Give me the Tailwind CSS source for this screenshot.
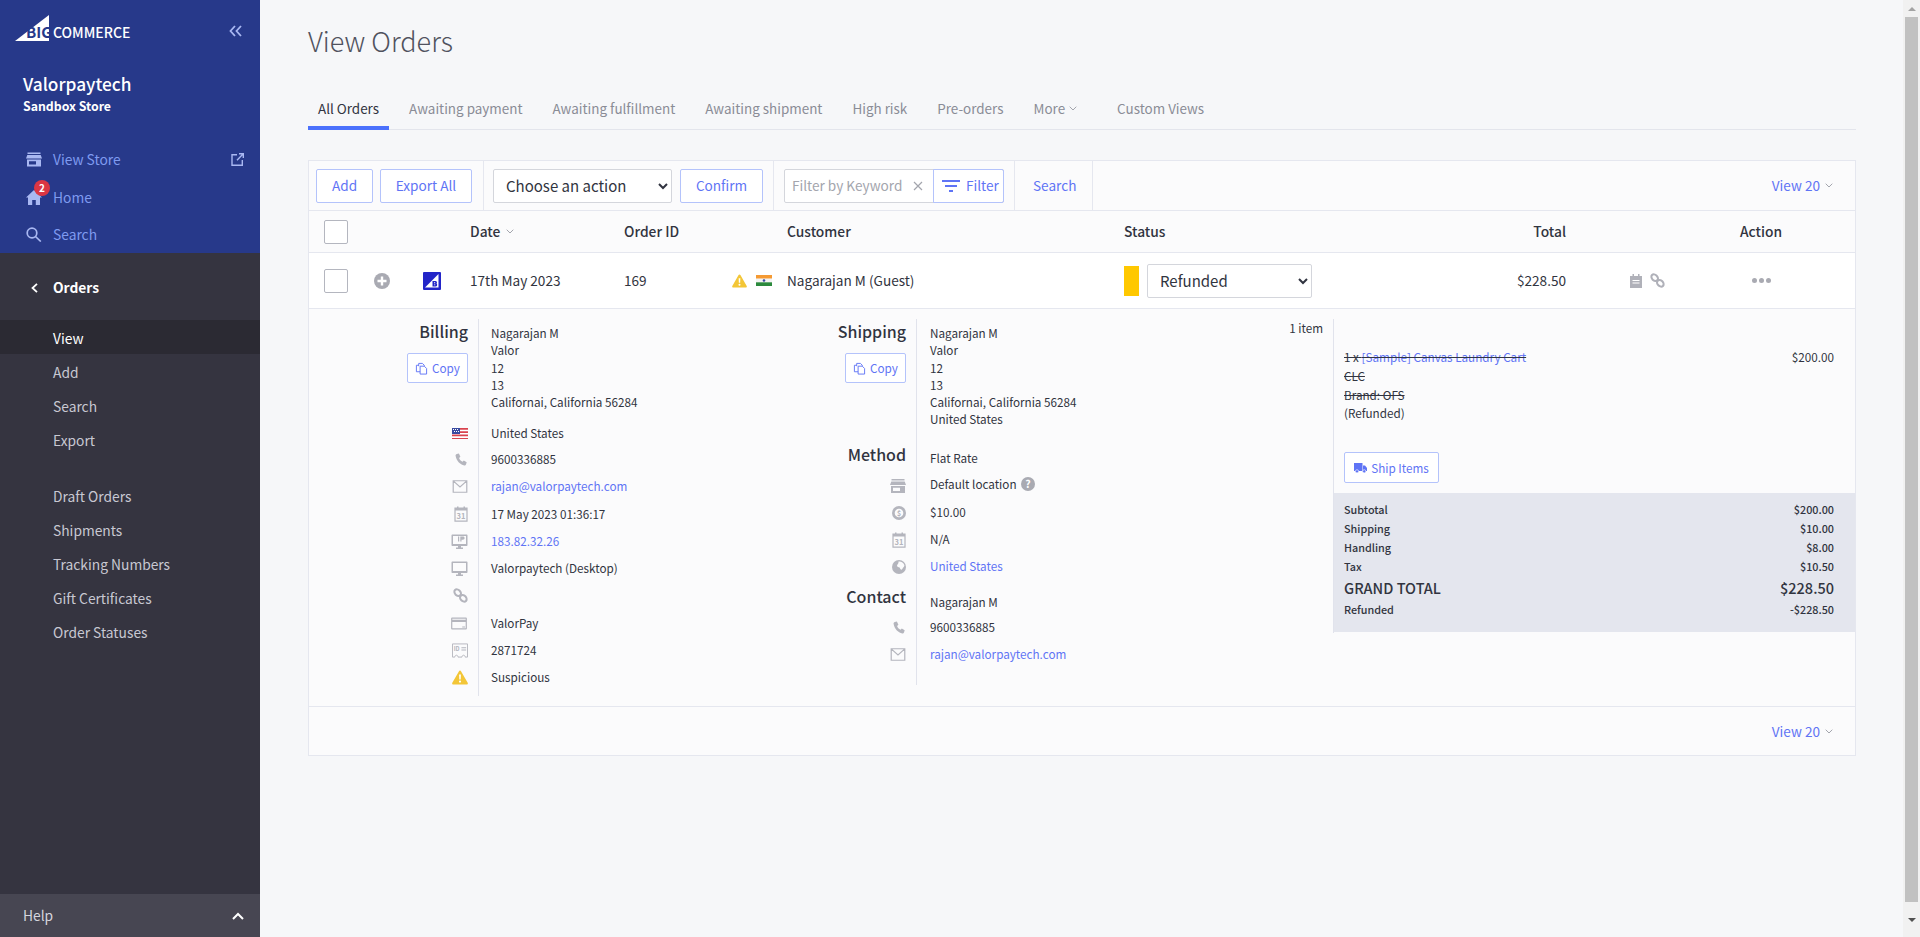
<!DOCTYPE html>
<html lang="en">
<head>
    <meta charset="UTF-8">
    <meta name="viewport" content="width=device-width, initial-scale=1.0">
    <title>View Orders</title>
    <script src="https://cdn.jsdelivr.net/npm/@tailwindcss/browser@4"></script>
</head>
<body class="bg-[#f6f7f9] text-[#313440] [font-family:'Noto_Sans_CJK_JP','Lato',sans-serif]">
    <!-- icon sprite -->
    <svg class="hidden" xmlns="http://www.w3.org/2000/svg">
        <symbol id="i-phone" viewBox="0 0 16 16"><path fill="currentColor" d="M3.2 1.2 5.6.6l1.7 3.6-1.5 1.4c.7 1.9 2 3.4 3.9 4.4l1.5-1.3 3.3 2-.8 2.5c-.3.8-1.1 1.2-1.9 1C6.900 13.100 2.700 8.600 1.800 3c-.1-.8.5-1.500 1.400-1.800z"/></symbol>
        <symbol id="i-mail" viewBox="0 0 16 14"><path fill="none" stroke="currentColor" stroke-width="1.300" d="M.7.8h14.600v12.400H.7zM1 1.200l7 6.300 7-6.300"/></symbol>
        <symbol id="i-cal" viewBox="0 0 14 16"><path fill="none" stroke="currentColor" stroke-width="1.200" d="M1 2.200h12v13H1z"/><path fill="currentColor" d="M1 2h12v2.500H1zM3 .5h1.500V3H3zM9.500.5H11V3H9.500z"/><text x="7" y="12.800" text-anchor="middle" font-size="7.500" font-weight="700" fill="currentColor">31</text></symbol>
        <symbol id="i-ip" viewBox="0 0 17 15"><path fill="currentColor" d="M1.500.5h14c.6 0 1 .4 1 1v9.500c0 .6-.4 1-1 1H10v1.500h2V15H5v-1.500h2V12H1.500c-.6 0-1-.4-1-1V1.500c0-.6.4-1 1-1z"/><path fill="#fbfbfc" d="M2 2h13v8H2z"/><path fill="currentColor" d="M7 2.500h1.200v5H7zM9.300 2.500h2.500c1.200 0 1.800.7 1.800 1.600s-.7 1.600-1.800 1.600h-1.300v1.800H9.300z"/></symbol>
        <symbol id="i-monitor" viewBox="0 0 17 15"><path fill="currentColor" d="M1.500.5h14c.6 0 1 .4 1 1v9.500c0 .6-.4 1-1 1H10v1.500h2V15H5v-1.500h2V12H1.500c-.6 0-1-.4-1-1V1.500c0-.6.4-1 1-1z"/><path fill="#fbfbfc" d="M2 2h13v8H2z"/></symbol>
        <symbol id="i-link" viewBox="0 0 16 16"><g fill="none" stroke="currentColor" stroke-width="2.200"><ellipse cx="5" cy="5" rx="4" ry="3" transform="rotate(45 5 5)"/><ellipse cx="11" cy="11" rx="4" ry="3" transform="rotate(45 11 11)"/></g></symbol>
        <symbol id="i-card" viewBox="0 0 18 14"><path fill="currentColor" d="M1.500.5h15c.6 0 1 .4 1 1v11c0 .6-.4 1-1 1h-15c-.6 0-1-.4-1-1v-11c0-.6.4-1 1-1zM1.800 1.800V3h14.400V1.800zm0 3.700v6.700h14.400V5.500zm10.700 4.700h3v1h-3z"/></symbol>
        <symbol id="i-id" viewBox="0 0 17 15"><path fill="none" stroke="currentColor" d="M.5.500h16v14H14c0-1-.6-2-1.700-2s-1.700 1-1.700 2H6.400c0-1-.6-2-1.700-2S3 13.500 3 14.500H.5z"/><text x="1.800" y="8.500" font-size="6" font-weight="700" fill="currentColor">ID</text><path fill="currentColor" d="M10 4h5v1h-5zM10 6.500h5v1h-5z"/></symbol>
        <symbol id="i-warn" viewBox="0 0 16 15"><path fill="#f3c637" d="M8 .5c.5 0 .8.3 1 .7l6.700 11.600c.4.8 0 1.700-1 1.700H1.300c-1 0-1.400-.9-1-1.700L7 1.200c.2-.4.500-.7 1-.7z"/><path fill="#fff" d="M7.100 4.500h1.800l-.2 5H7.300zM8 10.500a1.100 1.100 0 1 1 0 2.200 1.100 1.100 0 0 1 0-2.200z"/></symbol>
        <symbol id="i-store" viewBox="0 0 16 14"><path fill="currentColor" d="M1.500 0h13v1.500h-13zM1.300 2.500h13.400L16 6H0zM1 7h14v7H1zm2 1.800V12h7V8.800z"/></symbol>
        <symbol id="i-coin" viewBox="0 0 14 14"><circle cx="7" cy="7" r="7" fill="currentColor"/><circle cx="7" cy="7" r="4.300" fill="#fbfbfc"/><text x="7" y="9.500" text-anchor="middle" font-size="7" font-weight="700" fill="currentColor">$</text></symbol>
        <symbol id="i-globe" viewBox="0 0 14 14"><circle cx="7" cy="7" r="7" fill="currentColor"/><path fill="#fbfbfc" d="M6.500 1.500c2.500-.4 5 1 5.800 3.400.4 1.300-.6 2-1.300 2.800-.6.800-.7 2-1.800 2-1 0-1-1.400-1.700-2.100-.8-.7-2.300-.5-2.500-1.600C4.800 4.700 7 3.800 6.500 1.500z"/></symbol>
        <symbol id="i-copy" viewBox="0 0 14 14"><g fill="none" stroke="currentColor"><path d="M5.500 4.500h4.500l2.500 2.500v6h-7z"/><path d="M5.500 10.500h-4v-7H4"/><path d="M4 4.500v-3h4l2 2v1"/></g></symbol>
    </svg>

    <div class="flex h-[937px] w-[1920px] overflow-hidden">
        <!-- sidebar -->
        <aside class="flex w-[260px] shrink-0 flex-col bg-[#353440] text-[13.8px]">
            <div class="h-[253px] bg-[#27398a]">
                <div class="flex h-[56px] items-center pl-[15px] pr-[18px]">
                    <div class="relative h-[26px] w-[34px]">
                        <svg class="h-[26px] w-[34px]" viewBox="0 0 34 26"><path fill="#fff" d="M34 0v26H0z"/></svg>
                        <span class="absolute left-[11px] top-[8px] text-[15px] font-bold leading-[18px] text-[#27398a]">BIG</span>
                    </div>
                    <span class="ml-[4px] mt-[8px] text-[14px] font-medium leading-[18px] text-white">COMMERCE</span>
                    <svg class="ml-auto mt-[6px] h-[12px] w-[13px] text-[#a9b8f2]" viewBox="0 0 13 12" fill="none" stroke="currentColor" stroke-width="1.800"><path d="M6 1 1.500 6 6 11M12 1 7.500 6 12 11"/></svg>
                </div>
                <div class="px-[23px] pt-[16px] text-white">
                    <div class="text-[17.3px] font-medium leading-[24px]">Valorpaytech</div>
                    <div class="mt-px text-[12.3px] font-bold leading-[18px]">Sandbox Store</div>
                </div>
                <nav class="mt-[26px] text-[#7f9bf0]">
                    <a class="flex h-[37px] items-center pl-[26px] pr-[16px]">
                        <svg class="h-[15px] w-[16px] text-[#a9b8f2]"><use href="#i-store"/></svg>
                        <span class="ml-[11px]">View Store</span>
                        <svg class="ml-auto h-[13px] w-[13px] text-[#a9b8f2]" viewBox="0 0 13 13" fill="none" stroke="currentColor" stroke-width="1.400"><path d="M6 1.700H1v10.500h10.300V7M6 7.200 12 1M8 .8h4.300V5"/></svg>
                    </a>
                    <a class="relative flex h-[38px] items-center pl-[26px]">
                        <svg class="h-[15px] w-[16px] text-[#a9b8f2]" viewBox="0 0 16 15"><path fill="currentColor" d="M8 0 16 7.500h-2V15H9.800v-5H6.200v5H2V7.500H0z"/></svg>
                        <span class="ml-[11px]">Home</span>
                        <span class="absolute left-[34px] top-[2px] flex h-[16px] w-[16px] items-center justify-center rounded-full bg-[#db3643] text-[10px] font-bold leading-none text-white">2</span>
                    </a>
                    <a class="flex h-[37px] items-center pl-[26px]">
                        <svg class="h-[15px] w-[16px] text-[#a9b8f2]" viewBox="0 0 16 15" fill="none" stroke="currentColor" stroke-width="1.700"><circle cx="6" cy="6" r="4.800"/><path d="m9.500 9.500 5.300 5"/></svg>
                        <span class="ml-[11px]">Search</span>
                    </a>
                </nav>
            </div>
            <div class="flex h-[67px] items-center pl-[31px] pt-[2px] font-bold text-white">
                <svg class="h-[10px] w-[7px]" viewBox="0 0 7 10" fill="none" stroke="currentColor" stroke-width="1.800"><path d="M6 .8 1.500 5 6 9.200"/></svg>
                <span class="ml-[15px]">Orders</span>
            </div>
            <div class="text-[#c8c8d2]">
                <a class="flex h-[34px] items-center bg-[#2b2a33] pl-[53px] pt-[2px] text-white">View</a>
                <a class="flex h-[34px] items-center pl-[53px] pt-[2px]">Add</a>
                <a class="flex h-[34px] items-center pl-[53px] pt-[2px]">Search</a>
                <a class="flex h-[34px] items-center pl-[53px] pt-[2px]">Export</a>
                <a class="mt-[22px] flex h-[34px] items-center pl-[53px] pt-[2px]">Draft Orders</a>
                <a class="flex h-[34px] items-center pl-[53px] pt-[2px]">Shipments</a>
                <a class="flex h-[34px] items-center pl-[53px] pt-[2px]">Tracking Numbers</a>
                <a class="flex h-[34px] items-center pl-[53px] pt-[2px]">Gift Certificates</a>
                <a class="flex h-[34px] items-center pl-[53px] pt-[2px]">Order Statuses</a>
            </div>
            <div class="mt-auto flex h-[43px] items-center bg-[#474652] pl-[23px] pr-[16px] text-[#d6d6de]">
                <span>Help</span>
                <svg class="ml-auto h-[8px] w-[12px] text-white" viewBox="0 0 12 8" fill="none" stroke="currentColor" stroke-width="2"><path d="M1 7 6 2l5 5"/></svg>
            </div>
        </aside>

        <!-- main -->
        <main class="w-[1643px] shrink-0 pl-[48px] pr-[47px]">
            <h1 class="mt-[21px] text-[27px] font-extralight leading-[40px] text-[#50525e]">View Orders</h1>
            <div class="mt-[29px] flex h-[40px] border-b border-[#e3e5ec] text-[13.45px] text-[#8a8c96]">
                <a class="flex h-[40px] items-center border-b-4 border-[#4b71fc] px-[10px] text-[#313440]">All Orders</a>
                <a class="ml-[10px] flex h-[36px] items-center px-[10px]">Awaiting payment</a>
                <a class="ml-[10px] flex h-[36px] items-center px-[10px]">Awaiting fulfillment</a>
                <a class="ml-[10px] flex h-[36px] items-center px-[10px]">Awaiting shipment</a>
                <a class="ml-[10px] flex h-[36px] items-center px-[10px]">High risk</a>
                <a class="ml-[10px] flex h-[36px] items-center px-[10px]">Pre-orders</a>
                <a class="ml-[10px] flex h-[36px] items-center px-[10px]">More
                    <svg class="ml-[4px] h-[5px] w-[8px] text-[#a3a5ad]" viewBox="0 0 8 5" fill="none" stroke="currentColor"><path d="m.7.7 3.300 3.300L7.300.7"/></svg>
                </a>
                <a class="ml-[20px] flex h-[36px] items-center px-[10px]">Custom Views</a>
            </div>

            <section class="mt-[30px] w-[1548px] border border-[#e5e7ef] bg-[#fbfbfc] text-[13.6px]">
                <!-- toolbar -->
                <div class="flex h-[50px] items-center border-b border-[#e5e7ef] pl-[7px] pr-[22px] text-[13.6px] text-[#5f74f5]">
                    <button class="h-[34px] w-[57px] rounded-[2px] border border-[#b4c3fb] bg-white">Add</button>
                    <button class="ml-[7px] h-[34px] w-[92px] rounded-[2px] border border-[#b4c3fb] bg-white">Export All</button>
                    <div class="ml-[11px] flex h-full items-center border-l border-[#e5e7ef] pl-[9px]">
                        <select class="h-[34px] w-[179px] rounded-[2px] border border-[#d4d6dc] bg-white pl-[8px] text-[15px] text-[#313440]"><option>Choose an action</option></select>
                        <button class="ml-[8px] h-[34px] w-[83px] rounded-[2px] border border-[#b4c3fb] bg-white">Confirm</button>
                    </div>
                    <div class="ml-[10px] flex h-full items-center border-l border-[#e5e7ef] pl-[10px]">
                        <div class="flex h-[34px] w-[220px] rounded-[2px] border border-[#d4d6dc] bg-white">
                            <span class="flex w-[149px] items-center whitespace-nowrap pl-[7px] text-[#a3a5ad]">Filter by Keyword
                                <svg class="ml-auto mr-[11px] h-[10px] w-[10px] text-[#a3a5ad]" viewBox="0 0 10 10" fill="none" stroke="currentColor" stroke-width="1.200"><path d="m1 1 8 8M9 1 1 9"/></svg>
                            </span>
                            <span class="-m-px flex flex-1 items-center rounded-r-[2px] border border-[#b4c3fb] pl-[8px]">
                                <svg class="h-[12px] w-[18px]" viewBox="0 0 18 12" fill="currentColor"><path d="M0 0h18v2H0zM3 5h12v2H3zM7 10h4v2H7z"/></svg>
                                <span class="ml-[6px]">Filter</span>
                            </span>
                        </div>
                    </div>
                    <div class="ml-[10px] flex h-full w-[79px] items-center border-x border-[#e5e7ef] pl-[18px]">Search</div>
                    <div class="ml-auto flex items-center">View 20
                        <svg class="ml-[5px] h-[5px] w-[8px] text-[#a3a5ad]" viewBox="0 0 8 5" fill="none" stroke="currentColor"><path d="m.7.7 3.300 3.300L7.300.7"/></svg>
                    </div>
                </div>

                <!-- table header -->
                <div class="grid h-[42px] grid-cols-[65px_49px_47px_154px_108px_55px_337px_362px_80px_174px_auto] items-center border-b border-[#e5e7ef] text-[13.8px] font-medium">
                    <span class="pl-[15px]"><span class="block h-[24px] w-[24px] rounded-[2px] border border-[#b4b6bf] bg-white"></span></span>
                    <span></span><span></span>
                    <span class="flex items-center">Date
                        <svg class="ml-[6px] h-[5px] w-[8px] text-[#a3a5ad]" viewBox="0 0 8 5" fill="none" stroke="currentColor"><path d="m.7.7 3.300 3.300L7.300.7"/></svg>
                    </span>
                    <span>Order ID</span><span></span>
                    <span>Customer</span>
                    <span>Status</span>
                    <span class="text-right">Total</span>
                    <span></span>
                    <span>Action</span>
                </div>

                <!-- order row -->
                <div class="grid h-[56px] grid-cols-[65px_49px_47px_154px_108px_55px_337px_362px_80px_64px_110px_auto] items-center border-b border-[#e5e7ef] bg-white">
                    <span class="pl-[15px]"><span class="block h-[24px] w-[24px] rounded-[2px] border border-[#b4b6bf] bg-white"></span></span>
                    <svg class="h-[16px] w-[16px]" viewBox="0 0 16 16"><circle cx="8" cy="8" r="8" fill="#a9aab2"/><path fill="#fff" d="M6.800 3.500h2.400v3.300h3.300v2.400H9.200v3.300H6.800V9.200H3.500V6.800h3.300z"/></svg>
                    <svg class="h-[18px] w-[18px]" viewBox="0 0 18 18"><rect width="18" height="18" rx="1" fill="#2325c8"/><path fill="#fff" d="M15.500 2v13.500H2z"/><path fill="#2325c8" d="M9.500 9h3a1.500 1.500 0 0 1 1 2.600 1.600 1.600 0 0 1-1 2.900h-3zM11 10.300v.9h1.200v-.9zm0 2.100v.9h1.300v-.9z"/></svg>
                    <span>17th May 2023</span>
                    <span>169</span>
                    <span class="flex items-center gap-[9px]">
                        <svg class="h-[14px] w-[15px]"><use href="#i-warn"/></svg>
                        <svg class="h-[11px] w-[16px]" viewBox="0 0 16 11"><path fill="#f59a33" d="M0 0h16v3.700H0z"/><path fill="#f4f4f4" d="M0 3.700h16v3.600H0z"/><path fill="#2c8a3d" d="M0 7.300h16V11H0z"/><circle cx="8" cy="5.500" r="1.300" fill="#3a4aa0"/></svg>
                    </span>
                    <span>Nagarajan M (Guest)</span>
                    <span class="flex items-center">
                        <span class="h-[30px] w-[15px] bg-[#ffc800]"></span>
                        <select class="ml-[8px] h-[34px] w-[165px] rounded-[2px] border border-[#d4d6dc] bg-white pl-[8px] text-[15px]"><option>Refunded</option></select>
                    </span>
                    <span class="text-right">$228.50</span>
                    <span></span>
                    <span class="flex items-center gap-[8px] text-[#b0b1b9]">
                        <svg class="h-[14px] w-[12px]" viewBox="0 0 12 14"><path fill="currentColor" d="M0 2h12v12H0zM2.500 0H4v2H2.500zM8 0h1.500v2H8z"/><path fill="#fff" d="M2.500 6h7v1h-7zM2.500 8.500h7v1h-7z"/></svg>
                        <svg class="h-[15px] w-[15px]"><use href="#i-link"/></svg>
                    </span>
                    <span class="flex gap-[2px] pl-[12px]">
                        <span class="h-[5px] w-[5px] rounded-full bg-[#a9aab2]"></span><span class="h-[5px] w-[5px] rounded-full bg-[#a9aab2]"></span><span class="h-[5px] w-[5px] rounded-full bg-[#a9aab2]"></span>
                    </span>
                </div>

                <!-- order details -->
                <div class="flex h-[398px] border-b border-[#e5e7ef] pt-[10px] text-[11.7px] leading-[17.25px]">
                    <!-- billing -->
                    <div class="flex h-[377px] w-[169px] flex-col items-end pr-[10px] text-[#b4b5bd]">
                        <h3 class="h-[27px] text-[16px] font-medium leading-[24px] text-[#313440]">Billing</h3>
                        <button class="mt-[7px] flex h-[30px] w-[61px] items-center justify-center rounded-[2px] border border-[#b4c3fb] bg-white text-[#5f74f5]"><svg class="mr-[4px] h-[13px] w-[13px]"><use href="#i-copy"/></svg>Copy</button>
                        <div class="mt-[38px] flex h-[25px] items-center">
                            <svg class="h-[11px] w-[16px]" viewBox="0 0 16 11"><path fill="#d9434e" d="M0 0h16v11H0z"/><path fill="#fff" d="M0 1.700h16v1.600H0zM0 5h16v1.600H0zM0 8.300h16v1.600H0z"/><path fill="#3a4aa0" d="M0 0h8v6H0z"/><path fill="#fff" d="M1 1h1v1H1zM3 1h1v1H3zM5 1h1v1H5zM2 3h1v1H2zM4 3h1v1H4zM6 3h1v1H6z"/></svg>
                        </div>
                        <div class="flex h-[27px] items-center"><svg class="h-[14px] w-[14px]"><use href="#i-phone"/></svg></div>
                        <div class="flex h-[27px] items-center"><svg class="h-[13px] w-[16px]"><use href="#i-mail"/></svg></div>
                        <div class="flex h-[28px] items-center"><svg class="h-[16px] w-[14px]"><use href="#i-cal"/></svg></div>
                        <div class="flex h-[27px] items-center"><svg class="h-[15px] w-[17px]"><use href="#i-ip"/></svg></div>
                        <div class="flex h-[27px] items-center"><svg class="h-[15px] w-[17px]"><use href="#i-monitor"/></svg></div>
                        <div class="flex h-[27px] items-center"><svg class="h-[15px] w-[15px]"><use href="#i-link"/></svg></div>
                        <div class="flex h-[28px] items-center"><svg class="h-[13px] w-[18px]"><use href="#i-card"/></svg></div>
                        <div class="flex h-[27px] items-center"><svg class="h-[15px] w-[16px]"><use href="#i-id"/></svg></div>
                        <div class="flex h-[27px] items-center"><svg class="h-[15px] w-[16px]"><use href="#i-warn"/></svg></div>
                    </div>
                    <div class="h-[377px] w-[288px] border-l border-[#e1e3ec] pl-[12px] pt-[5px]">
                        <p>Nagarajan M<br>Valor<br>12<br>13<br>Californai, California 56284</p>
                        <div class="mt-[10px] flex h-[25px] items-center">United States</div>
                        <div class="flex h-[27px] items-center">9600336885</div>
                        <div class="flex h-[27px] items-center text-[#5f74f5]">rajan@valorpaytech.com</div>
                        <div class="flex h-[28px] items-center">17 May 2023 01:36:17</div>
                        <div class="flex h-[27px] items-center text-[#5f74f5]">183.82.32.26</div>
                        <div class="flex h-[27px] items-center">Valorpaytech (Desktop)</div>
                        <div class="h-[27px]"></div>
                        <div class="flex h-[28px] items-center">ValorPay</div>
                        <div class="flex h-[27px] items-center">2871724</div>
                        <div class="flex h-[27px] items-center">Suspicious</div>
                    </div>

                    <!-- shipping -->
                    <div class="flex h-[366px] w-[150px] flex-col items-end pr-[10px] text-[#b4b5bd]">
                        <h3 class="h-[27px] text-[16px] font-medium leading-[24px] text-[#313440]">Shipping</h3>
                        <button class="mt-[7px] flex h-[30px] w-[61px] items-center justify-center rounded-[2px] border border-[#b4c3fb] bg-white text-[#5f74f5]"><svg class="mr-[4px] h-[13px] w-[13px]"><use href="#i-copy"/></svg>Copy</button>
                        <h3 class="mt-[58px] h-[27px] text-[16px] font-medium leading-[26px] text-[#313440]">Method</h3>
                        <div class="mt-[4px] flex h-[27px] items-center"><svg class="h-[14px] w-[16px]"><use href="#i-store"/></svg></div>
                        <div class="flex h-[27px] items-center"><svg class="h-[14px] w-[14px]"><use href="#i-coin"/></svg></div>
                        <div class="flex h-[27px] items-center"><svg class="h-[16px] w-[14px]"><use href="#i-cal"/></svg></div>
                        <div class="flex h-[27px] items-center"><svg class="h-[14px] w-[14px]"><use href="#i-globe"/></svg></div>
                        <h3 class="mt-[3px] h-[27px] text-[16px] font-medium leading-[26px] text-[#313440]">Contact</h3>
                        <div class="mt-[4px] flex h-[27px] items-center"><svg class="h-[14px] w-[14px]"><use href="#i-phone"/></svg></div>
                        <div class="flex h-[27px] items-center"><svg class="h-[13px] w-[16px]"><use href="#i-mail"/></svg></div>
                    </div>
                    <div class="relative h-[366px] w-[417px] border-l border-[#e1e3ec] pl-[13px] pt-[5px]">
                        <span class="absolute right-[10px] top-0">1 item</span>
                        <p>Nagarajan M<br>Valor<br>12<br>13<br>Californai, California 56284<br>United States</p>
                        <div class="mt-[22px] flex h-[17px] items-center">Flat Rate</div>
                        <div class="mt-[9px] flex h-[17px] items-center">Default location
                            <svg class="ml-[4px] h-[14px] w-[14px]" viewBox="0 0 14 14"><circle cx="7" cy="7" r="7" fill="#a9aab2"/><text x="7" y="10.800" text-anchor="middle" font-size="10.500" font-weight="700" fill="#fff">?</text></svg>
                        </div>
                        <div class="mt-[11px] flex h-[17px] items-center">$10.00</div>
                        <div class="mt-[10px] flex h-[17px] items-center">N/A</div>
                        <div class="mt-[10px] flex h-[17px] items-center text-[#5f74f5]">United States</div>
                        <div class="mt-[19px] flex h-[17px] items-center">Nagarajan M</div>
                        <div class="mt-[8px] flex h-[17px] items-center">9600336885</div>
                        <div class="mt-[10px] flex h-[17px] items-center text-[#5f74f5]">rajan@valorpaytech.com</div>
                    </div>

                    <!-- items and totals -->
                    <div class="h-[314px] flex-1 border-l border-[#e1e3ec]">
                        <div class="flex h-[174px] justify-between pl-[10px] pr-[21px] pt-[29px]">
                            <div>
                                <p class="line-through"><span>1 x</span> <span class="text-[#5f74f5]">[Sample] Canvas Laundry Cart</span></p>
                                <p class="mt-[2px] line-through">CLC</p>
                                <p class="mt-px line-through">Brand: OFS</p>
                                <p class="mt-px">(Refunded)</p>
                                <button class="mt-[31px] flex h-[31px] w-[95px] items-center justify-center rounded-[2px] border border-[#b4c3fb] bg-white text-[#5f74f5]">
                                    <svg class="mr-[4px] h-[10px] w-[13px]" viewBox="0 0 13 10"><path fill="currentColor" d="M0 0h8.500v8H0zM9 2.500h2L13 5v3h-4z"/><circle cx="3" cy="8.300" r="1.600" fill="currentColor" stroke="#fff" stroke-width=".6"/><circle cx="10.200" cy="8.300" r="1.600" fill="currentColor" stroke="#fff" stroke-width=".6"/></svg>
                                    Ship Items
                                </button>
                            </div>
                            <span>$200.00</span>
                        </div>
                        <div class="h-[139px] bg-[#e4e6ee] pl-[10px] pr-[21px] pt-[7px] text-[10.8px] font-medium">
                            <div class="flex h-[19px] items-center justify-between"><span>Subtotal</span><span>$200.00</span></div>
                            <div class="flex h-[19px] items-center justify-between"><span>Shipping</span><span>$10.00</span></div>
                            <div class="flex h-[19px] items-center justify-between"><span>Handling</span><span>$8.00</span></div>
                            <div class="flex h-[19px] items-center justify-between"><span>Tax</span><span>$10.50</span></div>
                            <div class="flex h-[24px] items-center justify-between text-[14.5px]"><span>GRAND TOTAL</span><span>$228.50</span></div>
                            <div class="flex h-[19px] items-center justify-between"><span>Refunded</span><span>-$228.50</span></div>
                        </div>
                    </div>
                </div>

                <!-- footer -->
                <div class="flex h-[48px] items-center justify-end pr-[22px] text-[#5f74f5]">View 20
                    <svg class="ml-[5px] h-[5px] w-[8px] text-[#a3a5ad]" viewBox="0 0 8 5" fill="none" stroke="currentColor"><path d="m.7.7 3.300 3.300L7.300.7"/></svg>
                </div>
            </section>
        </main>

        <!-- scrollbar -->
        <div class="flex w-[17px] shrink-0 flex-col items-center bg-[#f1f1f1]">
            <div class="flex h-[17px] items-center"><span class="h-0 w-0 border-x-[4px] border-b-[4px] border-x-transparent border-b-[#a3a3a3]"></span></div>
            <div class="h-[885px] w-[13px] bg-[#c1c1c1]"></div>
            <div class="flex flex-1 items-center"><span class="h-0 w-0 border-x-[4px] border-t-[4px] border-x-transparent border-t-[#505050]"></span></div>
        </div>
    </div>
</body>
</html>
